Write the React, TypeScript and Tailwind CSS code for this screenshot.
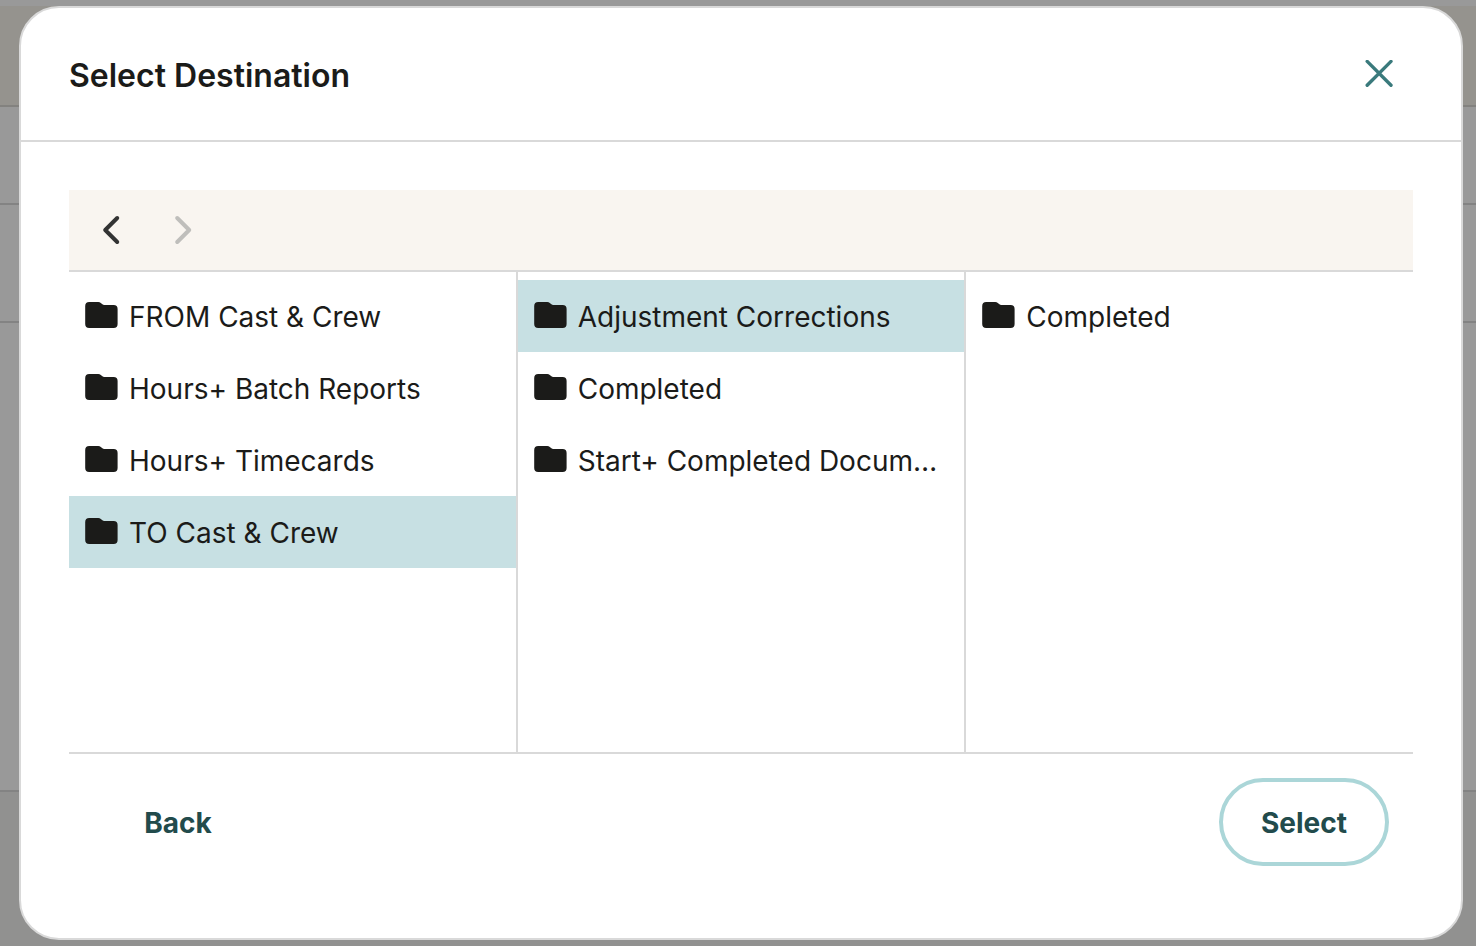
import { useState } from "react";

type Column = { label: string; items: string[]; selected?: string };

const initialColumns: Column[] = [
  {
    label: "Root folders",
    items: ["FROM Cast & Crew", "Hours+ Batch Reports", "Hours+ Timecards", "TO Cast & Crew"],
    selected: "TO Cast & Crew",
  },
  {
    label: "TO Cast & Crew",
    items: ["Adjustment Corrections", "Completed", "Start+ Completed Docum…"],
    selected: "Adjustment Corrections",
  },
  { label: "Adjustment Corrections", items: ["Completed"] },
];

function FolderIcon() {
  return (
    <svg className="h-7 w-[33px] shrink-0" viewBox="0 0 33 28" fill="#1b1b19" aria-hidden="true">
      <path d="M4.2 0H13.2Q14.8 0 15.8 .9L17.4 2.3Q18.2 3 19.2 3H28.6Q32.6 3 32.6 7V22Q32.6 26 28.6 26H4.2Q.2 26 .2 22V4Q.2 0 4.2 0Z" />
    </svg>
  );
}

function Chevron({ direction }: { direction: "left" | "right" }) {
  return (
    <svg
      className="h-7 w-4"
      viewBox="0 0 16 28"
      fill="none"
      stroke="currentColor"
      strokeWidth="4"
      strokeLinecap="round"
      strokeLinejoin="round"
      overflow="visible"
      aria-hidden="true"
    >
      <path d={direction === "left" ? "M14.2 2L2.2 14L14.2 26" : "M2.2 2L14.2 14L2.2 26"} />
    </svg>
  );
}

function Backdrop() {
  return (
    <div className="flex min-h-screen flex-col bg-[#919190]" aria-hidden="true">
      <div className="h-1.5 bg-[#999999]" />
      <div className="h-[101px] border-b-2 border-[#83827f] bg-[#95938e]" />
      <div className="h-[98px] border-b-2 border-[#838383] bg-[#999999]" />
      <div className="h-[118px] border-b-2 border-[#838383] bg-[#999999]" />
      <div className="h-[469px] border-b-2 border-[#838383] bg-[#999999]" />
    </div>
  );
}

export default function App() {
  const [columns, setColumns] = useState(initialColumns);

  const select = (index: number, name: string) =>
    setColumns(columns.map((c, i) => (i === index ? { ...c, selected: name } : c)));

  return (
    <div className="font-['Inter',sans-serif] text-[#1b1b19]">
      <Backdrop />
      <div className="fixed inset-0 overflow-auto pt-1.5 pr-[13px] pl-[19px]">
        <div
          role="dialog"
          aria-modal="true"
          aria-labelledby="dialog-title"
          className="rounded-[40px] border-2 border-[#d9d9d9] bg-white"
        >
          <header className="flex h-[134px] items-center justify-between border-b-2 border-[#d9d9d9] px-12">
            <h2 id="dialog-title" className="pt-1 text-[32px] leading-10 font-semibold">
              Select Destination
            </h2>
            <button type="button" aria-label="Close" className="p-5 text-[#3a7a7c]">
              <svg
                className="size-7"
                viewBox="0 0 28 28"
                fill="none"
                stroke="currentColor"
                strokeWidth="3.4"
                strokeLinecap="round"
                aria-hidden="true"
              >
                <path d="M2.2 1.4L26 25.2M26 1.4L2.2 25.2" />
              </svg>
            </button>
          </header>

          <div className="px-12 pt-12">
            <div className="flex h-[82px] items-center gap-2 border-b-2 border-[#d9d9d9] bg-[#f9f5f0] px-2.5">
              <button type="button" aria-label="Previous" className="flex size-16 items-center justify-center text-[#333333]">
                <Chevron direction="left" />
              </button>
              <button
                type="button"
                aria-label="Next"
                disabled
                className="flex size-16 items-center justify-center text-[#bfbebb]"
              >
                <Chevron direction="right" />
              </button>
            </div>

            <div className="flex h-[482px] border-b-2 border-[#d9d9d9]">
              {columns.map((column, index) => (
                <ul
                  key={column.label}
                  aria-label={column.label}
                  className="min-w-0 flex-1 border-r-2 border-[#d9d9d9] pt-2 last:border-r-0"
                >
                  {column.items.map((name) => (
                    <li key={name}>
                      <button
                        type="button"
                        aria-pressed={column.selected === name}
                        onClick={() => select(index, name)}
                        className="flex h-[72px] w-full items-center gap-[11px] px-4 text-left aria-pressed:bg-[#c7e0e3]"
                      >
                        <FolderIcon />
                        <span className="truncate pt-0.5 text-[28px] leading-10">{name}</span>
                      </button>
                    </li>
                  ))}
                </ul>
              ))}
            </div>

            <footer className="flex justify-between px-6 pt-6 pb-[72px] text-[28px] leading-10 font-bold text-[#224b4c]">
              <button type="button" className="h-[88px] min-w-[170px] rounded-full pt-0.5">
                Back
              </button>
              <button type="button" className="h-[88px] min-w-[170px] rounded-full border-4 border-[#abd6d8] pt-0.5">
                Select
              </button>
            </footer>
          </div>
        </div>
      </div>
    </div>
  );
}
